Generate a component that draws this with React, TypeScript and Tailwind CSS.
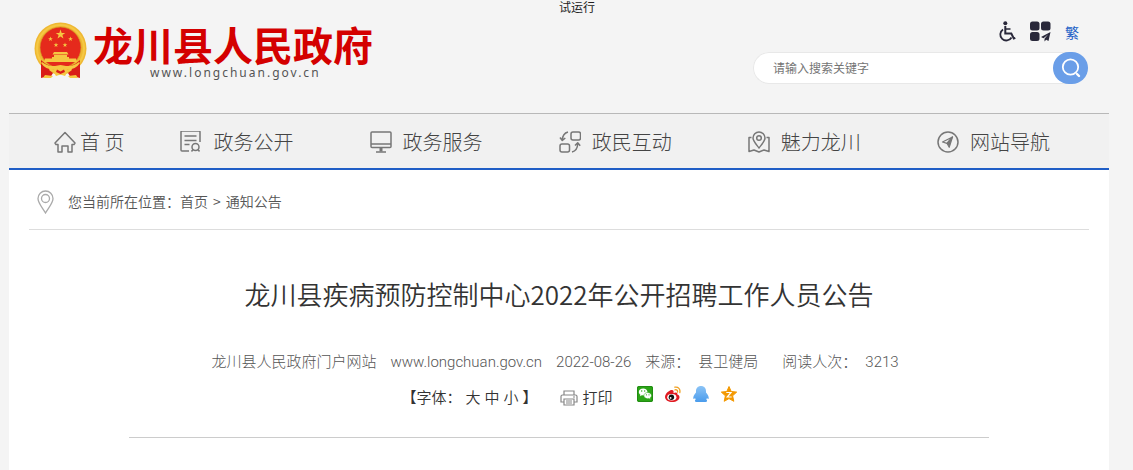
import type { ReactNode } from "react";

interface NavItem {
  label: string;
  icon: ReactNode;
}

function NavIcon({ children }: { children: ReactNode }) {
  return (
    <svg
      viewBox="0 0 22 22"
      className="h-[22px] w-[22px] shrink-0"
      fill="none"
      stroke="#777"
      strokeWidth="1.5"
      strokeLinejoin="round"
      aria-hidden="true"
    >
      {children}
    </svg>
  );
}

const navItems: NavItem[] = [
  {
    label: "政务公开",
    icon: (
      <NavIcon>
        <path d="M20 11V1a1 1 0 0 0-1-1H2a1 1 0 0 0-1 1v18a1 1 0 0 0 1 1h7M4.500 5h12M4.500 9.500h12M4.500 13.500h5" />
        <circle cx="15.500" cy="16" r="3.500" />
        <path d="M13 18.500L11.500 20.500M18 18.500L19.500 20.500" />
      </NavIcon>
    ),
  },
  {
    label: "政务服务",
    icon: (
      <NavIcon>
        <rect x="1" y="1" width="20" height="15.5" rx="1" />
        <path d="M1 13h20M6 21h10" />
        <path d="M11 16.500v4" strokeWidth="3" />
      </NavIcon>
    ),
  },
  {
    label: "政民互动",
    icon: (
      <NavIcon>
        <rect x="12" y="1" width="9.5" height="8" rx="2" />
        <rect x="1" y="13" width="9.5" height="8" rx="2" />
        <path d="M9 1C5 2 3.500 5 3.300 9M1 6.500l2.300 3 3-2.500M13 21c4-1 5.500-4 5.700-8M16 14.500l2.700-2.700 2.500 3" />
      </NavIcon>
    ),
  },
  {
    label: "魅力龙川",
    icon: (
      <NavIcon>
        <path d="M11 17C8 13 5 10 5 7a6 6 0 0 1 12 0c0 3-3 6-6 10z" />
        <circle cx="11" cy="7" r="2.3" />
        <path d="M3.500 6.500H1V20.500l5-1.500 5 2 5-2 5 1.500V6.500h-2.500" />
      </NavIcon>
    ),
  },
  {
    label: "网站导航",
    icon: (
      <NavIcon>
        <circle cx="11" cy="11" r="10" />
        <path d="M15.500 6L5.500 11l4.500 1.300z" strokeWidth="1.2" />
        <path d="M15.500 6L10 12.300l2.200 4z" fill="#777" strokeWidth="1.2" />
      </NavIcon>
    ),
  },
];

const STAR = "M0-5 1.180-1.620 4.760-1.550 1.900.620 2.940 4.050 0 2-2.940 4.050-1.900.620-4.760-1.550-1.180-1.620z";

function Emblem() {
  return (
    <svg viewBox="0 0 53 57" className="h-[57px] w-[53px] shrink-0" role="img" aria-label="国徽">
      <circle cx="26.5" cy="26.5" r="26" fill="#efb832" />
      <circle cx="26.5" cy="26.5" r="23.5" fill="none" stroke="#f5c844" strokeWidth="2" />
      <circle cx="26.5" cy="25.5" r="20.5" fill="#e52a1c" stroke="#d59a24" strokeWidth="0.7" />
      <path
        d="M7 38c3 3 6 5 10 6l-2 4 4 3-3 5-5-1-4 1c0-6 0-12 0-18zM46 38c-3 3-6 5-10 6l2 4-4 3 3 5 5-1 4 1c0-6 0-12 0-18z"
        fill="#d91d18"
      />
      <g fill="#f5c842">
        <path d={STAR} transform="translate(26.500 12.500)" />
        <path d={STAR} transform="translate(16.500 17) scale(.5)" />
        <path d={STAR} transform="translate(36.500 17) scale(.5)" />
        <path d={STAR} transform="translate(22 23) scale(.5)" />
        <path d={STAR} transform="translate(31 23) scale(.5)" />
        <path d="M20 30h13l1.500 2.500h-16zM20 33h13v2h2v1.500h7l1 3.500H10l1-3.500h7V35h2z" />
        <path d="M8 40c5 4 9 4 13 4l5.500-1 5.500 1c4 0 8 0 13-4l1 1c-4 6-10 7-14 6l-5.500-1-5.500 1c-4 1-10 0-14-6z" />
        <path d="M22 45h9l3 4-3 5-4.500-1.500L22 54l-3-5z" />
        <path d="M11 53l8 1-2 2H9zM42 53l-8 1 2 2h8z" />
      </g>
      <path d="M23 47.500l3.500 2L30 47.500l1 2.500-4.500 2-4.500-2z" fill="#d91d18" />
    </svg>
  );
}

function Header() {
  return (
    <header>
      <p className="ml-[50%] text-xs leading-[14px] text-[#222]">试运行</p>
      <div className="flex h-[99px] items-start justify-between pl-[25px] pr-[21px]">
        <a href="#" className="flex items-start gap-[6px] pt-2">
          <Emblem />
          <div>
            <div className="text-[40px] font-bold leading-[44px] text-[#d40000]">龙川县人民政府</div>
            <div className="pl-[57px] font-['Noto_Sans'] text-xs leading-[14px] tracking-[2px] text-[#555]">
              www.longchuan.gov.cn
            </div>
          </div>
        </a>

        <div className="flex flex-col items-end gap-[10px] pt-[7px]">
          {/* TOOLS */}
          <div className="flex items-center gap-[14px] pr-[9px]">
            <a href="#" aria-label="无障碍">
              <svg viewBox="0 0 17 21" className="h-[21px] w-[17px]" fill="none" stroke="#29283a" aria-hidden="true">
                <circle cx="6.3" cy="2.3" r="2" fill="#29283a" stroke="none" />
                <path d="M6.300 5v7.500h6l2.500 5 1.500-.700" strokeWidth="2" />
                <path d="M6.300 8h5.200" strokeWidth="1.5" />
                <path d="M4 8.500a6 6 0 1 0 8.500 8" strokeWidth="1.8" />
              </svg>
            </a>
            <a href="#" aria-label="应用">
              <svg viewBox="0 0 21 21" className="h-[21px] w-[21px]" fill="#29283a" aria-hidden="true">
                <rect x="0" y="0.5" width="9.5" height="9" rx="2.5" />
                <rect x="11" y="0.5" width="9.5" height="9" rx="2.5" />
                <rect x="0" y="11" width="9.5" height="9" rx="2.5" />
                <path d="M20.500 11l-9.500 5 2.500 1.200 4.500-3.700-3.500 4.300v2.700l1.700-1.800 2.300 1.300z" />
              </svg>
            </a>
            <a href="#" className="text-sm leading-5 text-[#205ec6]">
              繁
            </a>
          </div>

          {/* SEARCH */}
          <form className="flex h-8 w-[335px] rounded-full bg-white">
            <input
              type="text"
              aria-label="搜索"
              placeholder="请输入搜索关键字"
              className="-mr-4 min-w-0 flex-1 rounded-l-full border-y border-l border-[#e8e8e8] pl-[19px] text-xs text-[#333] outline-none placeholder:text-[#757575]"
            />
            <button
              type="button"
              aria-label="搜索"
              className="z-10 flex h-8 w-[35px] items-center justify-center rounded-2xl bg-[#6a9ee8]"
            >
              <svg viewBox="0 0 20 20" className="h-5 w-5" fill="none" stroke="#fff" strokeWidth="1.8" aria-hidden="true">
                <circle cx="9.5" cy="9" r="7.7" />
                <path d="M16 16l2 2" strokeWidth="2.4" strokeLinecap="round" />
              </svg>
            </button>
          </form>
        </div>
      </div>
    </header>
  );
}

function Nav() {
  return (
    <nav className="flex h-[57px] items-center border-b-2 border-t border-b-[#205ec6] border-t-[#b8b8b8] bg-[#f1f1f1] pl-[45px] pr-[59px] pt-px text-xl font-light text-[#444]">
      <a href="#" className="mr-14 flex shrink-0 items-center gap-1">
        <NavIcon>
          <path d="M1 12L11 1.500 21 12l-1 1.500h-2V21h-4v-6H8v6H4v-7.500H2z" />
        </NavIcon>
        首 页
      </a>
      <ul className="flex flex-1 justify-between">
        {navItems.map((item) => (
          <li key={item.label}>
            <a href="#" className="flex items-center gap-[11px] whitespace-nowrap">
              {item.icon}
              {item.label}
            </a>
          </li>
        ))}
      </ul>
    </nav>
  );
}

function Breadcrumb() {
  return (
    <div className="mx-5 flex h-[60px] items-center border-b border-[#ddd] pl-2 pt-1 text-sm font-[350] text-[#555]">
      <svg
        viewBox="0 0 17 24"
        className="mr-[14px] h-6 w-[17px]"
        fill="none"
        stroke="#aaa"
        strokeWidth="1.3"
        aria-hidden="true"
      >
        <path d="M8.500 23C5 17 1 13 1 8.500a7.500 7.500 0 0 1 15 0C16 13 12 17 8.500 23z" />
        <circle cx="8.5" cy="8.5" r="4" />
      </svg>
      <div className="flex pb-0.5">
        <span>您当前所在位置：</span>
        <a href="#">首页</a>
        <span className="px-[5px]">&gt;</span>
        <a href="#">通知公告</a>
      </div>
    </div>
  );
}

function ShareIcons() {
  return (
    <div className="flex gap-3 pb-2">
      <a href="#" aria-label="微信">
        <svg viewBox="0 0 16 16" className="h-4 w-4" aria-hidden="true">
          <rect width="16" height="16" rx="2" fill="#2ba516" />
          <rect x="0.5" y="0.5" width="15" height="15" rx="1.5" fill="none" stroke="#218c12" />
          <path
            d="M6.200 2.500c-2.500 0-4.400 1.500-4.400 3.500 0 1.200.6 2.100 1.600 2.700L3 10.200l1.800-.9c.5.1.9.1 1.400.1 2.400 0 4.300-1.500 4.300-3.400S8.600 2.500 6.200 2.500z"
            fill="#fff"
          />
          <path
            d="M10.700 6.500c-2.200 0-3.800 1.400-3.800 3.100s1.600 3.100 3.800 3.100l1.200-.2 1.600.9-.4-1.400c.9-.6 1.400-1.400 1.400-2.400 0-1.700-1.700-3.100-3.800-3.100z"
            fill="#fff"
            stroke="#2ba516"
            strokeWidth="0.5"
          />
          <g fill="#2ba516">
            <circle cx="4.7" cy="5" r="0.7" />
            <circle cx="7.7" cy="5" r="0.7" />
            <circle cx="9.4" cy="8.8" r="0.6" />
            <circle cx="12" cy="8.8" r="0.6" />
          </g>
        </svg>
      </a>
      <a href="#" aria-label="微博">
        <svg viewBox="0 0 16 16" className="h-4 w-4" fill="none" aria-hidden="true">
          <path
            d="M6.500 4C3.500 4.500 0 8 0 11c0 3 3.500 5 7.300 5 4 0 7.200-2.200 7.200-4.800 0-1.600-1.300-2.200-2.200-2.600.5-1.900-1-2.600-3.800-1.500C9 5 8.200 3.700 6.500 4z"
            fill="#e01b22"
          />
          <ellipse cx="6.8" cy="11.2" rx="4.6" ry="3.2" fill="#fff" />
          <circle cx="6.4" cy="11.3" r="2.7" fill="#111" />
          <circle cx="5.6" cy="11.9" r="0.9" fill="#fff" />
          <path
            d="M9.800 1.200c3.500-.7 5.800 2 5 5.300M10 3.800c1.800-.4 2.900.8 2.500 2.400"
            stroke="#f0a020"
            strokeWidth="1.3"
            strokeLinecap="round"
          />
        </svg>
      </a>
      <a href="#" aria-label="QQ">
        <svg viewBox="0 0 16 16" className="h-4 w-4" aria-hidden="true">
          <defs>
            <linearGradient id="qq" x1="0" y1="0" x2="0" y2="1">
              <stop offset="0" stopColor="#8cc4f6" />
              <stop offset="1" stopColor="#4a9cec" />
            </linearGradient>
          </defs>
          <path
            d="M8 0C4.800 0 3 2.300 3 5v1.500C1.300 8.500 0 10.500.3 12.500c.3.8 1 .3 1.700-.5l.7 1.500c-1.200.7-1.200 2.500.8 2.500h9c2 0 2-1.800.8-2.500L14 12c.7.800 1.400 1.300 1.700.5.3-2-1-4-2.700-6V5c0-2.700-1.800-5-5-5z"
            fill="url(#qq)"
          />
        </svg>
      </a>
      <a href="#" aria-label="QQ空间">
        <svg viewBox="0 0 16 16" className="h-4 w-4" aria-hidden="true">
          <path d="M8 .5l2.200 5 5.500.6-4.100 3.700 1.200 5.500L8 12.600l-4.800 2.700 1.200-5.500L.3 6.100l5.500-.6z" fill="#f39800" stroke="#f39800" strokeLinejoin="round" />
          <path d="M5.300 6.500h4.700L6.200 11h4.500" fill="none" stroke="#fff" strokeWidth="1.2" />
        </svg>
      </a>
    </div>
  );
}

function Article() {
  return (
    <main className="px-[120px] pb-8 pt-11">
      <h1 className="text-center text-[26px] font-[350] leading-10 text-[#333]">
        龙川县疾病预防控制中心2022年公开招聘工作人员公告
      </h1>

      {/* META */}
      <div className="mt-[38px] flex justify-center whitespace-nowrap pr-2 font-['Roboto','Noto_Sans_CJK_SC',sans-serif] text-[15px] font-light leading-5 text-[#555]">
        <span className="mr-[14px]">龙川县人民政府门户网站</span>
        <span className="mr-[14px]">www.longchuan.gov.cn</span>
        <span className="mr-[14px]">2022-08-26</span>
        <span className="mr-2">来源：</span>
        <span className="mr-6">县卫健局</span>
        <span className="mr-2">阅读人次：</span>
        <span>3213</span>
      </div>

      {/* TOOLBAR */}
      <div className="flex h-[66px] items-center justify-center border-b border-[#ccc] pb-[14px] pl-5 text-[15px] font-[350] text-[#333]">
        <div className="mr-[22px] flex items-center gap-1">
          <span>【字体：</span>
          <button type="button">大</button>
          <button type="button">中</button>
          <button type="button">小</button>
          <span>】</span>
        </div>
        <button type="button" className="mr-6 flex items-center gap-[5px]">
          <svg
            viewBox="0 0 18 16"
            className="h-4 w-[18px]"
            fill="none"
            stroke="#888"
            strokeWidth="1.2"
            aria-hidden="true"
          >
            <path d="M4 5V1h10v4M4 12H1V6.500C1 5.500 1.500 5 2.500 5h13c1 0 1.500.5 1.500 1.500V12h-3" />
            <path d="M4 9h10v6H4zM6 11h6M6 13h6M13 7h2" />
          </svg>
          打印
        </button>
        <ShareIcons />
      </div>
    </main>
  );
}

export default function App() {
  return (
    <div className="min-h-screen bg-[#f4f4f4] pl-[9px] pr-6 font-['Noto_Sans_CJK_SC',sans-serif]">
      <Header />
      <Nav />
      <div className="min-h-[300px] bg-white">
        <Breadcrumb />
        <Article />
      </div>
    </div>
  );
}
